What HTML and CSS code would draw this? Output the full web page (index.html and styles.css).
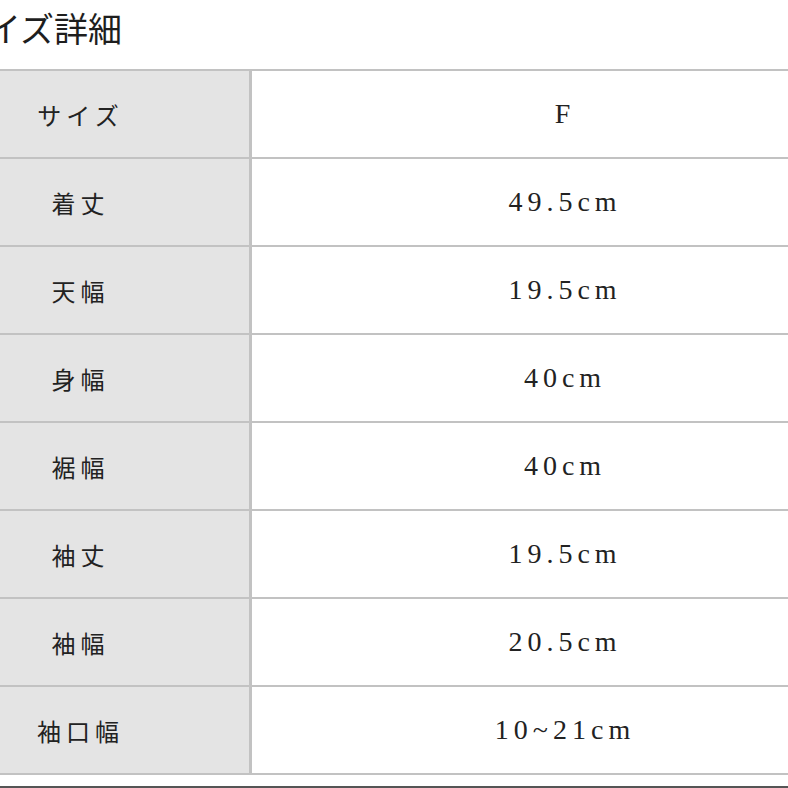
FILE: index.html
```html
<!DOCTYPE html>
<html lang="ja">
<head>
<meta charset="utf-8">
<title>サイズ詳細</title>
<link rel="stylesheet" href="styles.css">
</head>
<body>
<div class="page">
  <h1 class="title">サイズ詳細</h1>
  <table class="size-table">
    <tbody>
      <tr><th>サイズ</th><td>F</td></tr>
      <tr><th>着丈</th><td>49.5cm</td></tr>
      <tr><th>天幅</th><td>19.5cm</td></tr>
      <tr><th>身幅</th><td>40cm</td></tr>
      <tr><th>裾幅</th><td>40cm</td></tr>
      <tr><th>袖丈</th><td>19.5cm</td></tr>
      <tr><th>袖幅</th><td>20.5cm</td></tr>
      <tr><th>袖口幅</th><td>10~21cm</td></tr>
    </tbody>
  </table>
</div>
<div class="bottom-rule"></div>
</body>
</html>
```

FILE: styles.css
```css
html, body {
  margin: 0;
  padding: 0;
  background: #ffffff;
  overflow: hidden;
  width: 788px;
  height: 788px;
}

body {
  font-family: "Liberation Serif", "Noto Sans CJK JP", serif;
  color: #222222;
}

.page {
  margin-left: -47px;
  width: 921px;
}

.title {
  margin: 0 0 13px 0;
  font-family: "Noto Sans CJK JP", sans-serif;
  font-weight: 400;
  font-size: 34px;
  line-height: 56px;
  height: 56px;
  color: #1e1e1e;
  letter-spacing: 0;
}

.size-table {
  margin-left: -45px;
  border-collapse: separate;
  border-spacing: 0;
  width: 966px;
}

.size-table th,
.size-table td {
  height: 86px;
  padding: 0;
  border-top: 2px solid #c2c2c2;
  text-align: center;
  vertical-align: middle;
}

.size-table tr:last-child th,
.size-table tr:last-child td {
  border-bottom: 2px solid #c2c2c2;
}

.size-table th {
  width: 341px;
  background: #e4e4e4;
  font-family: "Noto Sans CJK JP", sans-serif;
  font-weight: 400;
  font-size: 24px;
  letter-spacing: 5px;
  text-indent: 4px;
  color: #222222;
}

.size-table td {
  border-left: 3px solid #c2c2c2;
  background: #ffffff;
  font-family: "Liberation Serif", serif;
  font-size: 28px;
  letter-spacing: 5px;
  text-indent: 4px;
  color: #222222;
}

.bottom-rule {
  margin-top: 11px;
  height: 2px;
  background: #555555;
}
```
